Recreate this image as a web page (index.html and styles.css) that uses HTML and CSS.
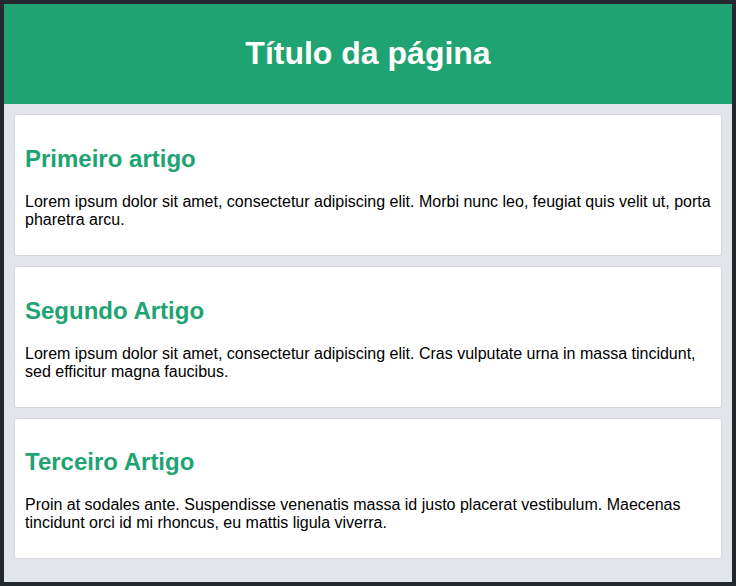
FILE: index.html
```html
<!DOCTYPE html>
<html lang="pt">
<head>
<meta charset="utf-8">
<title>Título da página</title>
<link rel="stylesheet" href="styles.css">
</head>
<body>
<div class="frame">
  <header class="page-header">
    <h1 class="page-title">Título da página</h1>
  </header>
  <main class="articles">
    <article class="card">
      <h2 class="card-title">Primeiro artigo</h2>
      <p class="card-text">Lorem ipsum dolor sit amet, consectetur adipiscing elit. Morbi nunc leo, feugiat quis velit ut, porta pharetra arcu.</p>
    </article>
    <article class="card">
      <h2 class="card-title">Segundo Artigo</h2>
      <p class="card-text">Lorem ipsum dolor sit amet, consectetur adipiscing elit. Cras vulputate urna in massa tincidunt, sed efficitur magna faucibus.</p>
    </article>
    <article class="card">
      <h2 class="card-title">Terceiro Artigo</h2>
      <p class="card-text">Proin at sodales ante. Suspendisse venenatis massa id justo placerat vestibulum. Maecenas tincidunt orci id mi rhoncus, eu mattis ligula viverra.</p>
    </article>
  </main>
</div>
</body>
</html>
```
FILE: styles.css
```css
html, body {
  margin: 0;
  padding: 0;
  height: 100%;
}
body {
  font-family: "Liberation Sans", Arial, sans-serif;
  font-size: 16px;
  color: #000;
  background: #e2e5e9;
}
.frame {
  box-sizing: border-box;
  min-height: 100%;
  border: 4px solid #23272e;
  background: #e2e5e9;
  display: flex;
  flex-direction: column;
}
.page-header {
  background: #20a372;
  padding: 10px;
  text-align: center;
}
.page-title {
  font-size: 32px;
  font-weight: bold;
  color: #fff;
  margin: 21.44px 0;
}
.articles {
  padding: 10px;
  display: flex;
  flex-direction: column;
  gap: 10px;
}
.card {
  background: #fff;
  border: 1px solid #d6dade;
  border-radius: 3px;
  padding: 10px;
}
.card-title {
  font-size: 24px;
  font-weight: bold;
  color: #20a372;
  margin: 19.92px 0;
}
.card-text {
  margin: 16px 0;
}
```
